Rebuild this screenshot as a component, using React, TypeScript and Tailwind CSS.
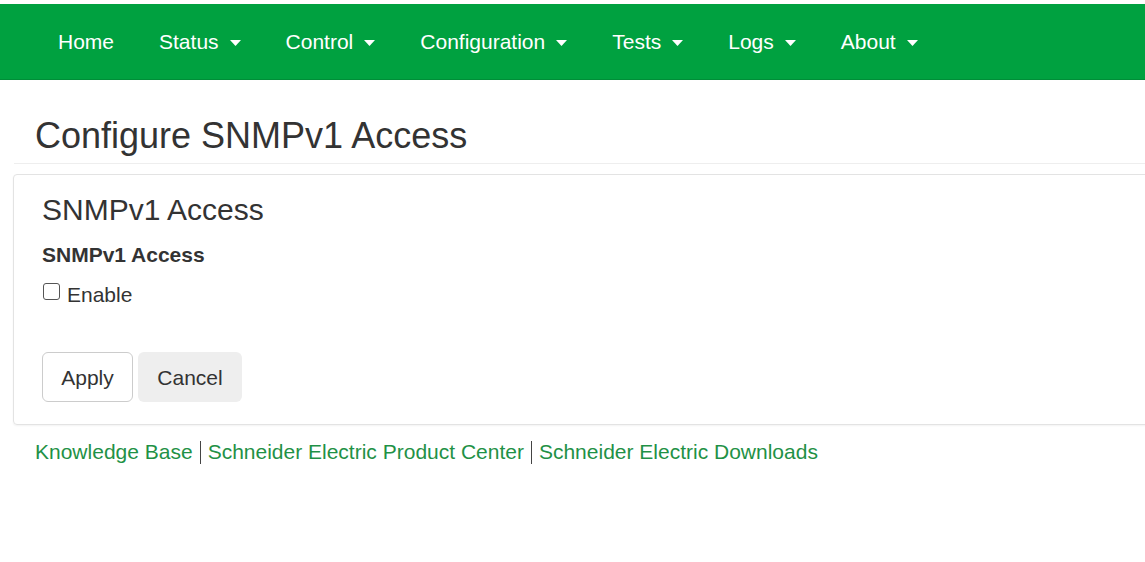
import React from "react";

const menu = [
  { label: "Home", caret: false },
  { label: "Status", caret: true },
  { label: "Control", caret: true },
  { label: "Configuration", caret: true },
  { label: "Tests", caret: true },
  { label: "Logs", caret: true },
  { label: "About", caret: true },
];

const links = [
  "Knowledge Base",
  "Schneider Electric Product Center",
  "Schneider Electric Downloads",
];

function Caret() {
  return (
    <svg width="11" height="6" viewBox="0 0 11 6" className="ml-[11px] mt-[2px]">
      <path d="M0 0 H11 L5.5 6 Z" fill="currentColor" />
    </svg>
  );
}

export default function App() {
  return (
    <div
      className="min-h-[562px] overflow-x-hidden bg-white text-[#333]"
      style={{ fontFamily: '"Liberation Sans", Arial, sans-serif' }}
    >
      {/* top navigation */}
      <nav className="mt-[4px] flex h-[76px] items-center gap-[45px] border-b border-[#008d38] bg-[#00a140] pl-[58px] text-[21px] text-white">
        {menu.map((m) => (
          <a key={m.label} className="flex items-center">
            {m.label}
            {m.caret && <Caret />}
          </a>
        ))}
      </nav>

      <div className="ml-[14px]">
        <h1 className="mt-[36px] border-b border-[#eee] pb-[7px] pl-[21px] text-[36px] leading-[1.1]">
          Configure SNMPv1 Access
        </h1>

        <div className="-mr-[20px] -ml-[1px] mt-[10px] rounded-[4px] border border-[#e3e3e3] pb-[22px] pl-[28px] pt-[18px] shadow-[0_1px_2px_rgba(0,0,0,0.05)]">
          <h2 className="text-[30px] leading-[1.1]">SNMPv1 Access</h2>
          <div className="mt-[14px] text-[21px] font-bold leading-[1.4]">SNMPv1 Access</div>
          <label className="mt-[11px] flex items-start text-[21px] leading-[1.4]">
            <span className="mt-[3px] ml-[1px] h-[17px] w-[17px] rounded-[3px] border border-[#555] bg-white" />
            <span className="ml-[7px]">Enable</span>
          </label>

          <div className="mt-[43px] flex gap-[5px]">
            <button className="h-[50px] w-[91px] rounded-[6px] border border-[#ccc] bg-white text-[21px] text-[#333]">
              Apply
            </button>
            <button className="h-[50px] w-[104px] rounded-[6px] bg-[#eee] text-[21px] text-[#333]">
              Cancel
            </button>
          </div>
        </div>

        {/* footer links */}
        <div className="mt-[13px] flex items-center pl-[21px] text-[21px] leading-[1.3] text-[#1f9146]">
          {links.map((l, i) => (
            <React.Fragment key={l}>
              {i > 0 && <span className="mx-[7px] h-[23px] w-px bg-[#444]" />}
              <a>{l}</a>
            </React.Fragment>
          ))}
        </div>
      </div>
    </div>
  );
}
